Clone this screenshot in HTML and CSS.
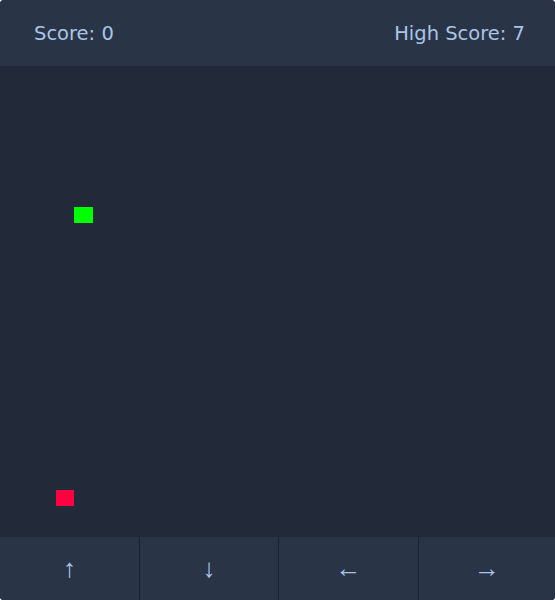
FILE: index.html
```html
<!DOCTYPE html>
<html>
<head>
<meta charset="utf-8">
<link rel="stylesheet" href="styles.css">
</head>
<body>
<div class="app">
  <header class="scorebar">
    <span class="score">Score: 0</span>
    <span class="score">High Score: 7</span>
  </header>
  <main class="board">
    <div class="cell snake" style="left: calc(100% * 4 / 30); top: calc(100% * 9 / 30);"></div>
    <div class="cell food" style="left: calc(100% * 3 / 30); top: calc(100% * 27 / 30);"></div>
  </main>
  <nav class="controls">
    <button class="ctrl">↑</button>
    <button class="ctrl">↓</button>
    <button class="ctrl">←</button>
    <button class="ctrl">→</button>
  </nav>
</div>
</body>
</html>
```
FILE: styles.css
```css
html, body {
  margin: 0;
  padding: 0;
  background: #ffffff;
}
.app {
  width: 555px;
  height: 600px;
  display: flex;
  flex-direction: column;
  border-radius: 4px;
  overflow: hidden;
  background: #222938;
  font-family: "DejaVu Sans", Verdana, sans-serif;
}
.scorebar {
  height: 66px;
  flex: none;
  display: flex;
  align-items: center;
  justify-content: space-between;
  padding: 0 30px 0 34px;
  background: #2a3447;
  color: #a9c5e6;
  font-size: 19.5px;
}
.board {
  flex: 1;
  position: relative;
  background: #222938;
}
.cell {
  position: absolute;
  width: calc(100% / 30);
  height: calc(100% / 30);
}
.snake { background: #00ff00; }
.food { background: #ff0040; }
.controls {
  height: 63px;
  flex: none;
  display: grid;
  grid-template-columns: 139px 138px 139px 1fr;
  gap: 1px;
  background: #1c2230;
}
.ctrl {
  border: 0;
  margin: 0;
  padding: 0;
  background: #2a3447;
  color: #a9c5e6;
  font-family: "Liberation Sans", sans-serif;
  font-size: 26px;
}
```
